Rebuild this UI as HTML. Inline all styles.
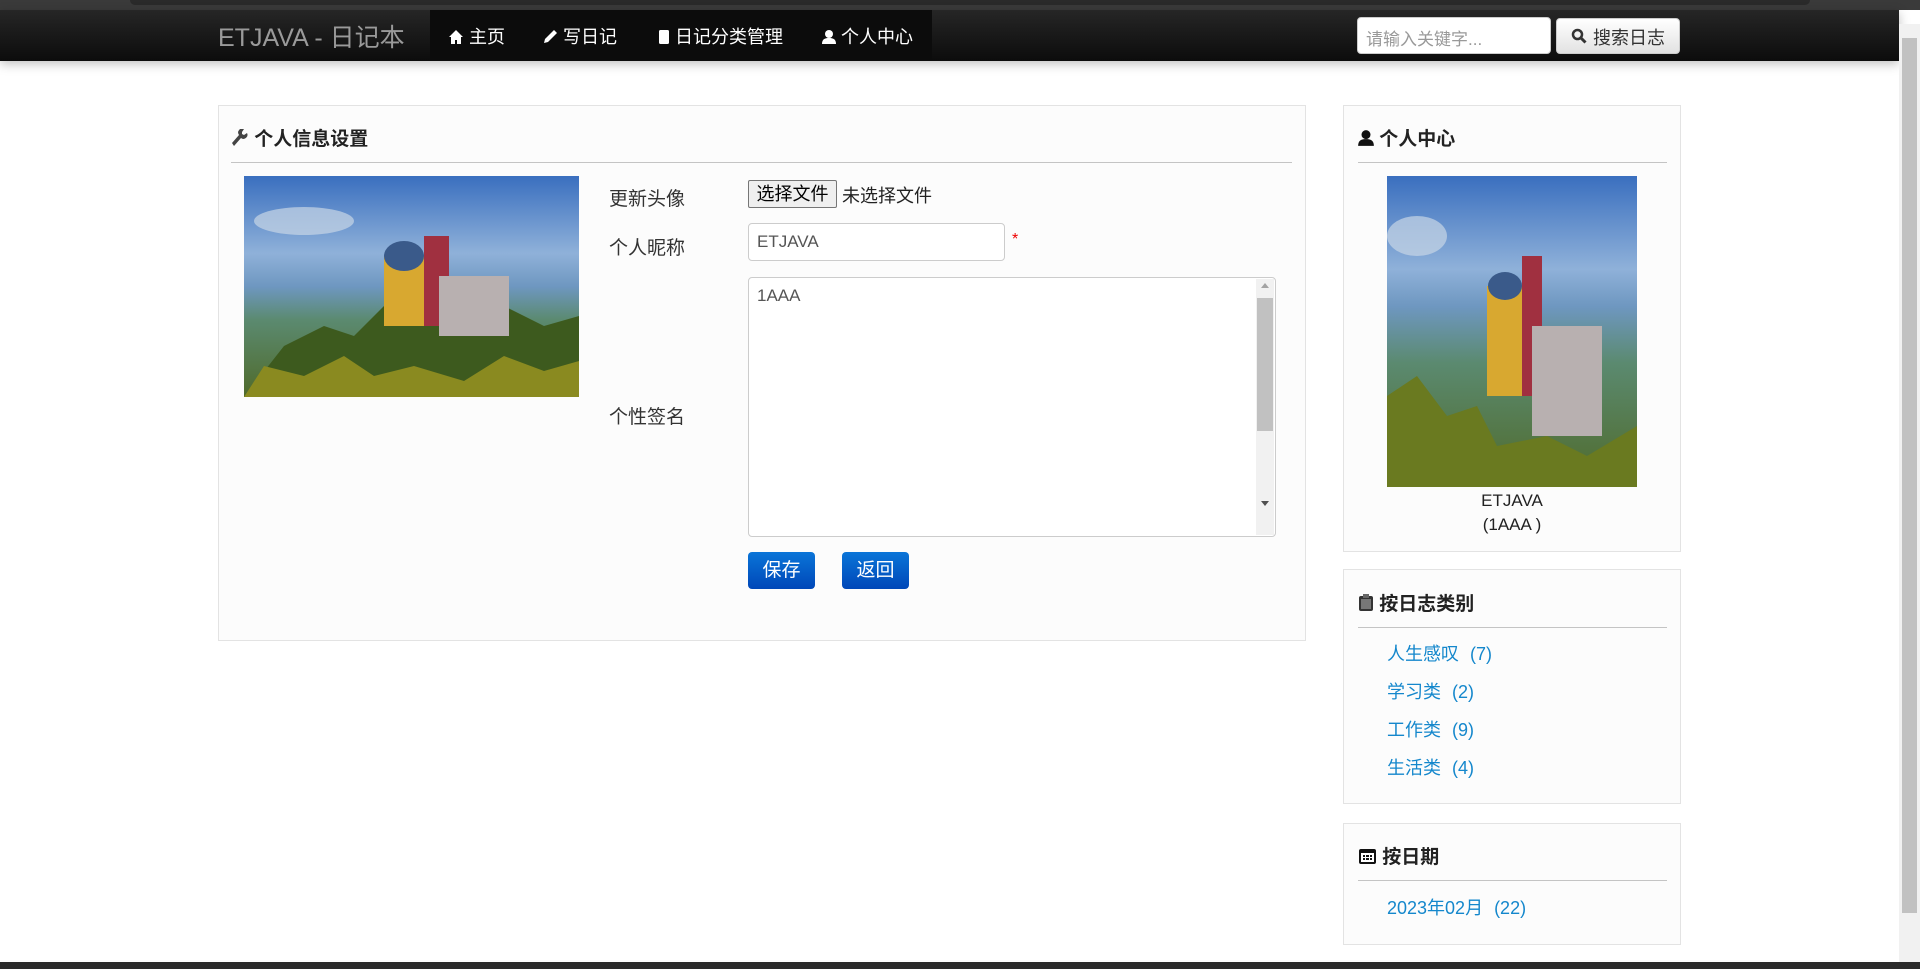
<!DOCTYPE html>
<html><head><meta charset="utf-8"><style>
*{margin:0;padding:0;box-sizing:border-box}
body{width:1920px;height:969px;overflow:hidden;background:#fff;font-family:"Liberation Sans","Noto Sans CJK SC",sans-serif;font-size:18px;color:#333;position:relative}
.a{position:absolute}
.top{left:0;top:0;width:1920px;height:10px;background:#3a3a3a}
.tab{left:130px;top:0;width:1680px;height:5px;background:#2a2a2a;border-radius:0 0 8px 8px}
.nav{left:0;top:10px;width:1899px;height:51px;background:linear-gradient(#262626,#0c0c0c);box-shadow:0 3px 10px rgba(0,0,0,.25)}
.brand{left:218px;top:18px;font-size:25px;color:#9a9a9a}
.navin{left:430px;top:10px;width:502px;height:51px;background:#0c0c0c}
.ni{top:23px;color:#fff;font-size:18px}
.srch{left:1357px;top:17px;width:194px;height:37px;background:#fff;border:1px solid #ccc;border-radius:4px;color:#999;font-size:17px;padding:7px 8px}
.sbtn{left:1556px;top:18px;width:124px;height:36px;background:linear-gradient(#fff,#e2e2e2);border:1px solid #ccc;border-radius:4px;font-size:18px;padding:5px 0 0 36px;color:#333}
.sb{left:1899px;top:24px;width:21px;height:938px;background:#f1f1f1}
.sbt{left:1902px;top:38px;width:15px;height:875px;background:#c1c1c1}
.bot{left:0;top:962px;width:1920px;height:7px;background:#2b2b2b}
.panel{background:#fcfcfc;border:1px solid #e3e3e3}
.h{font-size:19px;font-weight:bold;color:#222}
.hr{height:1px;background:#c4c4c4}
.lbl{left:609px;font-size:19px;color:#333}
.lk{color:#1487cc;font-size:18px;left:1387px;word-spacing:6px}
.btn{top:552px;width:67px;height:37px;background:linear-gradient(#0a75d8,#0047b8);border-radius:4px;color:#fff;font-size:19px;text-align:center;line-height:37px}
</style></head><body>
<div class="a top"></div><div class="a tab"></div>
<div class="a nav"></div>
<div class="a brand">ETJAVA - 日记本</div>
<div class="a navin"></div>
<div class="a ni" style="left:448px"><svg width="16" height="16" viewBox="0 0 16 16" style="vertical-align:-2px"><path d="M8 1 1 8h2v7h4v-4h2v4h4V8h2z" fill="#fff"/></svg> 主页</div>
<div class="a ni" style="left:542px"><svg width="16" height="16" viewBox="0 0 16 16" style="vertical-align:-2px"><path d="M12 1l3 3-9 9-4 1 1-4z" fill="#fff"/></svg> 写日记</div>
<div class="a ni" style="left:658px"><svg width="12" height="16" viewBox="0 0 12 16" style="vertical-align:-2px"><rect x="1" y="1" width="10" height="14" rx="1.5" fill="#fff"/></svg> 日记分类管理</div>
<div class="a ni" style="left:822px"><svg width="14" height="16" viewBox="0 0 14 16" style="vertical-align:-2px"><circle cx="7" cy="5" r="4" fill="#fff"/><path d="M0 15c0-5 3-6 7-6s7 1 7 6z" fill="#fff"/></svg> 个人中心</div>
<div class="a srch">请输入关键字...</div>
<div class="a sbtn"><svg class="a" style="left:14px;top:9px" width="16" height="16" viewBox="0 0 16 16"><circle cx="6.5" cy="6.5" r="4.5" stroke="#333" stroke-width="2.5" fill="none"/><path d="M10 10l4.5 4.5" stroke="#333" stroke-width="3"/></svg>搜索日志</div>
<div class="a sb"></div><div class="a sbt"></div>
<div class="a bot"></div>

<div class="a panel" style="left:218px;top:105px;width:1088px;height:536px"></div>
<div class="a h" style="left:231px;top:124px"><svg width="18" height="18" viewBox="0 0 18 18" style="vertical-align:-2px"><path d="M3 17l7-8a4 4 0 0 0 6-5l-3 2-2-1 0-2 2-3a4 4 0 0 0-5 6l-7 8z" fill="#444"/></svg> 个人信息设置</div>
<div class="a hr" style="left:231px;top:162px;width:1061px"></div>
<svg class="a" style="left:244px;top:176px" width="335" height="221" viewBox="0 0 335 221">
<defs><linearGradient id="s" x1="0" y1="0" x2="0" y2="1"><stop offset="0" stop-color="#3a6fbf"/><stop offset=".35" stop-color="#8fb1d9"/><stop offset=".5" stop-color="#6e97c0"/><stop offset=".65" stop-color="#5b8a70"/><stop offset="1" stop-color="#4f6a2a"/></linearGradient></defs>
<rect width="335" height="221" fill="url(#s)"/>
<ellipse cx="60" cy="45" rx="50" ry="14" fill="#c8d6e6" opacity=".7"/>
<path d="M0 221 L40 170 80 150 110 160 150 120 200 110 260 130 300 150 335 140 335 221z" fill="#3d5a1e"/>
<rect x="140" y="80" width="40" height="70" fill="#d8a830"/>
<rect x="180" y="60" width="25" height="90" fill="#a03040"/>
<rect x="195" y="100" width="70" height="60" fill="#b8b0b0"/>
<ellipse cx="160" cy="80" rx="20" ry="15" fill="#3a5a8a"/>
<path d="M0 221 L20 190 60 200 100 180 130 200 170 190 220 205 260 180 300 195 335 185 335 221z" fill="#8a8a20"/>
</svg>
<div class="a lbl" style="top:184px">更新头像</div>
<div class="a lbl" style="top:233px">个人昵称</div>
<div class="a lbl" style="top:402px">个性签名</div>
<div class="a" style="left:748px;top:180px;width:89px;height:28px;background:#efefef;border:1px solid #767676;border-radius:2px;font-size:18px;text-align:center;line-height:26px;color:#000">选择文件</div>
<div class="a" style="left:842px;top:182px;font-size:18px;color:#222">未选择文件</div>
<div class="a" style="left:748px;top:223px;width:257px;height:38px;background:#fff;border:1px solid #ccc;border-radius:4px;padding:8px 8px;font-size:17px;color:#555">ETJAVA</div>
<div class="a" style="left:1012px;top:231px;color:#e00;font-size:16px">*</div>
<div class="a" style="left:748px;top:277px;width:528px;height:260px;background:#fff;border:1px solid #ccc;border-radius:4px;padding:8px 8px;font-size:17px;color:#555">1AAA</div>
<div class="a" style="left:1256px;top:279px;width:18px;height:256px;background:#f1f1f1"></div>
<div class="a" style="left:1257px;top:298px;width:16px;height:133px;background:#c1c1c1"></div>
<div class="a" style="left:1261px;top:283px;width:0;height:0;border:4px solid transparent;border-bottom:5px solid #a3a3a3;border-top:0"></div>
<div class="a" style="left:1261px;top:501px;width:0;height:0;border:4px solid transparent;border-top:5px solid #505050;border-bottom:0"></div>
<div class="a btn" style="left:748px">保存</div>
<div class="a btn" style="left:842px">返回</div>

<div class="a panel" style="left:1343px;top:105px;width:338px;height:447px"></div>
<div class="a h" style="left:1358px;top:124px"><svg width="16" height="18" viewBox="0 0 14 16" style="vertical-align:-2px"><circle cx="7" cy="5" r="4" fill="#111"/><path d="M0 15c0-5 3-6 7-6s7 1 7 6z" fill="#111"/></svg> 个人中心</div>
<div class="a hr" style="left:1358px;top:162px;width:309px"></div>
<svg class="a" style="left:1387px;top:176px" width="250" height="311" viewBox="0 0 250 311">
<defs><linearGradient id="s2" x1="0" y1="0" x2="0" y2="1"><stop offset="0" stop-color="#3a6fbf"/><stop offset=".3" stop-color="#8fb1d9"/><stop offset=".42" stop-color="#6e97c0"/><stop offset=".6" stop-color="#5b8a70"/><stop offset="1" stop-color="#4f6a2a"/></linearGradient></defs>
<rect width="250" height="311" fill="url(#s2)"/>
<ellipse cx="30" cy="60" rx="30" ry="20" fill="#c8d6e6" opacity=".7"/>
<rect x="100" y="110" width="35" height="110" fill="#d8a830"/>
<rect x="135" y="80" width="20" height="140" fill="#a03040"/>
<rect x="145" y="150" width="70" height="110" fill="#b8b0b0"/>
<ellipse cx="118" cy="110" rx="17" ry="14" fill="#3a5a8a"/>
<path d="M0 311 L0 220 30 200 60 240 90 230 110 270 160 260 200 280 250 250 250 311z" fill="#6a7a20"/>
</svg>
<div class="a" style="left:1343px;top:489px;width:338px;text-align:center;font-size:17px;line-height:24px;color:#222">ETJAVA<br>(1AAA )</div>

<div class="a panel" style="left:1343px;top:569px;width:338px;height:235px"></div>
<div class="a h" style="left:1358px;top:589px"><svg width="16" height="18" viewBox="0 0 16 18" style="vertical-align:-2px"><rect x="1" y="2" width="14" height="15" rx="2" fill="#333"/><rect x="5" y="0" width="6" height="4" fill="#666"/><rect x="3" y="5" width="10" height="10" fill="#777"/></svg> 按日志类别</div>
<div class="a hr" style="left:1358px;top:627px;width:309px"></div>
<div class="a lk" style="top:640px">人生感叹 (7)</div>
<div class="a lk" style="top:678px">学习类 (2)</div>
<div class="a lk" style="top:716px">工作类 (9)</div>
<div class="a lk" style="top:754px">生活类 (4)</div>

<div class="a panel" style="left:1343px;top:823px;width:338px;height:122px"></div>
<div class="a h" style="left:1358px;top:842px"><svg width="19" height="18" viewBox="0 0 19 18" style="vertical-align:-2px"><rect x="1" y="2" width="17" height="15" rx="2" fill="#111"/><rect x="3" y="6" width="13" height="9" fill="#fff"/><rect x="5" y="8" width="9" height="5" fill="#111"/><rect x="7" y="8" width="1" height="5" fill="#fff"/><rect x="11" y="8" width="1" height="5" fill="#fff"/><rect x="5" y="10" width="9" height="1" fill="#fff"/></svg> 按日期</div>
<div class="a hr" style="left:1358px;top:880px;width:309px"></div>
<div class="a lk" style="top:894px">2023年02月 (22)</div>
</body></html>
